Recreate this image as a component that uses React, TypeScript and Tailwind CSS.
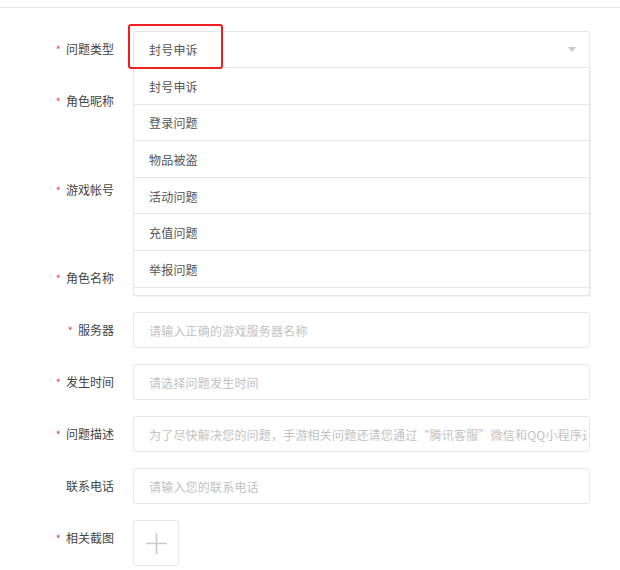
import React from "react";

const font = {
  fontFamily: '"Noto Sans CJK SC", "Liberation Sans", sans-serif',
};

const options = ["封号申诉", "登录问题", "物品被盗", "活动问题", "充值问题", "举报问题", "其他问题"];

function Label({ text, required = true }: { text: string; required?: boolean }) {
  return (
    <div className="flex h-9 w-[114px] shrink-0 items-center justify-end text-[12px] text-[#444]">
      {required ? <span className="mr-[5px] text-[11px] text-[#f04848]">*</span> : null}
      <span>{text}</span>
    </div>
  );
}

function TextInput({ placeholder }: { placeholder: string }) {
  return (
    <input
      className="h-9 w-full rounded-[3px] border border-[#e6e6e6] bg-white pl-[15px] pr-[2px] text-[12px] tracking-[0.2px] text-[#555] outline-none placeholder:text-[#c2c2c2]"
      placeholder={placeholder}
      readOnly
      style={font}
    />
  );
}

export default function App() {
  return (
    <div className="h-[570px] w-[620px] overflow-hidden bg-white" style={font}>
      <div className="h-[8px] border-b border-[#e8e8e8]" />
      <form className="flex flex-col pt-[23px]">
        {/* 问题类型 (open select) */}
        <div className="relative z-10 mb-[15px] flex">
          <Label text="问题类型" />
          <div className="relative ml-[19px] w-[457px]">
            <div className="flex h-[37px] items-center justify-between rounded-t-[3px] border border-[#e6e6e6] bg-white pl-[15px] pr-[13px] text-[12px] tracking-[0.2px] text-[#555]">
              <span>封号申诉</span>
              <svg width="8" height="5" viewBox="0 0 8 5">
                <path d="M0 0h8L4 5z" fill="#c8c8c8" />
              </svg>
            </div>
            <div className="absolute left-0 right-0 top-[37px] h-[228px] overflow-hidden rounded-b-[3px] border border-t-0 border-[#e6e6e6] bg-white shadow-[1px_1px_2px_rgba(0,0,0,0.06)]">
              {options.map((o) => (
                <div
                  className="flex h-[36.6px] items-center border-b border-[#e8e8e8] pl-[15px] pt-[2px] text-[12px] tracking-[0.2px] text-[#555]"
                  key={o}
                >
                  {o}
                </div>
              ))}
            </div>
            <div className="pointer-events-none absolute left-[-5px] top-[-7px] h-[45px] w-[95px] rounded-[3px] border-2 border-[#f01f1f]" />
          </div>
        </div>

        <div className="mb-4 flex h-[73px]">
          <Label text="角色昵称" />
          <div className="ml-[19px] w-[457px]">
            <TextInput placeholder="请输入角色昵称" />
          </div>
        </div>
        <div className="mb-4 flex h-[72px]">
          <Label text="游戏帐号" />
          <div className="ml-[19px] w-[457px]">
            <TextInput placeholder="请输入游戏帐号" />
          </div>
        </div>
        <div className="mb-4 flex">
          <Label text="角色名称" />
          <div className="ml-[19px] w-[457px]">
            <TextInput placeholder="请输入角色名称" />
          </div>
        </div>

        <div className="mb-4 flex">
          <Label text="服务器" />
          <div className="ml-[19px] w-[457px]">
            <TextInput placeholder="请输入正确的游戏服务器名称" />
          </div>
        </div>
        <div className="mb-4 flex">
          <Label text="发生时间" />
          <div className="ml-[19px] w-[457px]">
            <TextInput placeholder="请选择问题发生时间" />
          </div>
        </div>
        <div className="mb-4 flex">
          <Label text="问题描述" />
          <div className="ml-[19px] w-[457px]">
            <TextInput placeholder="为了尽快解决您的问题，手游相关问题还请您通过“腾讯客服”微信和QQ小程序进行反馈" />
          </div>
        </div>
        <div className="mb-4 flex">
          <Label text="联系电话" required={false} />
          <div className="ml-[19px] w-[457px]">
            <TextInput placeholder="请输入您的联系电话" />
          </div>
        </div>
        <div className="flex">
          <Label text="相关截图" />
          <div className="ml-[19px] flex h-[46px] w-[46px] items-center justify-center rounded-[3px] border border-[#e6e6e6]">
            <svg width="23" height="23" viewBox="0 0 23 23">
              <path d="M11.5 1v21M1 11.5h21" stroke="#c8c8c8" strokeWidth="1.5" />
            </svg>
          </div>
        </div>
      </form>
    </div>
  );
}
